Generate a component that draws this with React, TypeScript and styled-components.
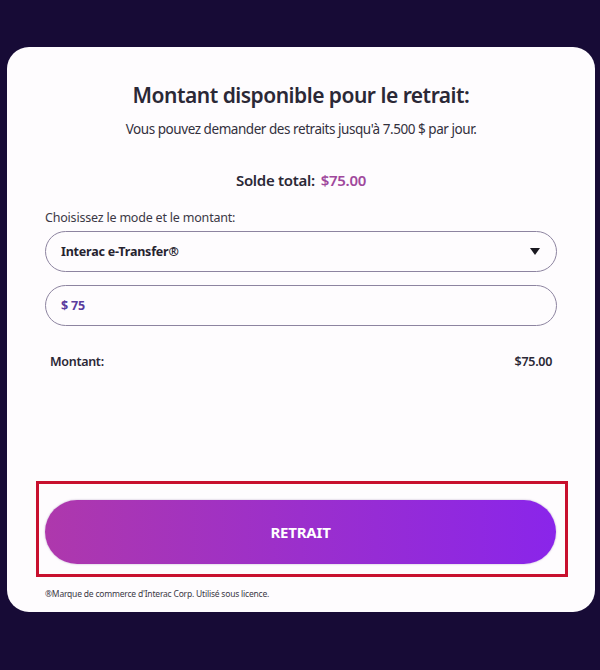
import React from "react";
import styled, { createGlobalStyle } from "styled-components";

const Global = createGlobalStyle`
  html, body { margin: 0; padding: 0; background: #170b36; }
  body { font-family: "Noto Sans", "Open Sans", sans-serif; }
  * { box-sizing: border-box; }
`;

const Page = styled.div`
  width: 600px;
  height: 670px;
  padding: 47px 5px 0 7px;
`;

const Card = styled.div`
  width: 588px;
  height: 565px;
  background: #fefcfe;
  border-radius: 22px;
  display: flex;
  flex-direction: column;
  padding: 0 38px 0 38px;
`;

const Title = styled.h1`
  margin: 34px 0 0;
  text-align: center;
  font-size: 21px;
  font-weight: 600;
  color: #2b2836;
  letter-spacing: -0.5px;
  line-height: 28px;
`;

const Sub = styled.p`
  margin: 10px 0 0;
  text-align: center;
  font-size: 13.5px;
  color: #33303d;
  letter-spacing: -0.45px;
  line-height: 20px;
`;

const Balance = styled.div`
  margin-top: 30px;
  display: flex;
  justify-content: center;
  gap: 6px;
  font-size: 15px;
  font-weight: 600;
  line-height: 22px;
  letter-spacing: -0.3px;
  color: #2b2836;
`;

const Amount = styled.span`
  color: #a0489c;
`;

const Label = styled.div`
  margin: 19px 0 0 0;
  font-size: 12.5px;
  color: #3b3845;
  letter-spacing: -0.2px;
  line-height: 16px;
`;

const Field = styled.div<{ $accent?: boolean }>`
  margin-top: 5px;
  height: 41px;
  border: 1px solid #8d84a0;
  border-radius: 21px;
  display: flex;
  align-items: center;
  justify-content: space-between;
  padding: 0 16px 0 15px;
  font-size: 12.5px;
  font-weight: 700;
  letter-spacing: -0.2px;
  color: ${(p) => (p.$accent ? "#5b3d9e" : "#26232f")};
  & + & {
    margin-top: 13px;
  }
`;

const Arrow = styled.span`
  width: 0;
  height: 0;
  border-left: 5px solid transparent;
  border-right: 5px solid transparent;
  border-top: 7px solid #1a1820;
`;

const Row = styled.div`
  margin-top: 27px;
  padding: 0 5px;
  display: flex;
  justify-content: space-between;
  font-size: 12.5px;
  font-weight: 600;
  color: #2b2836;
  letter-spacing: -0.3px;
`;

const Highlight = styled.div`
  margin: 111px -11px 0 -9px;
  border: 3px solid #c8102e;
  padding: 16px 9px 10px 6px;
`;

const Button = styled.button`
  width: 100%;
  height: 64px;
  border: none;
  border-radius: 32px;
  background: linear-gradient(90deg, #ae38ac 0%, #9b2fcc 50%, #8a25ea 100%);
  color: #fff;
  font-family: inherit;
  font-size: 15px;
  font-weight: 700;
  letter-spacing: -0.2px;
  box-shadow: 0 0 2px rgba(80, 40, 120, 0.4);
`;

const Foot = styled.div`
  margin-top: 11px;
  font-size: 8.5px;
  color: #3b3845;
  letter-spacing: -0.2px;
`;

export default function App() {
  return (
    <Page>
      <Global />
      <Card>
        <Title>Montant disponible pour le retrait:</Title>
        <Sub>Vous pouvez demander des retraits jusqu'à 7.500 $ par jour.</Sub>
        <Balance>
          <span>Solde total:</span>
          <Amount>$75.00</Amount>
        </Balance>
        <Label>Choisissez le mode et le montant:</Label>
        <Field>
          <span>Interac e-Transfer®</span>
          <Arrow />
        </Field>
        <Field $accent>
          <span>$ 75</span>
        </Field>
        <Row>
          <span>Montant:</span>
          <span>$75.00</span>
        </Row>
        <Highlight>
          <Button>RETRAIT</Button>
        </Highlight>
        <Foot>®Marque de commerce d'Interac Corp. Utilisé sous licence.</Foot>
      </Card>
    </Page>
  );
}
